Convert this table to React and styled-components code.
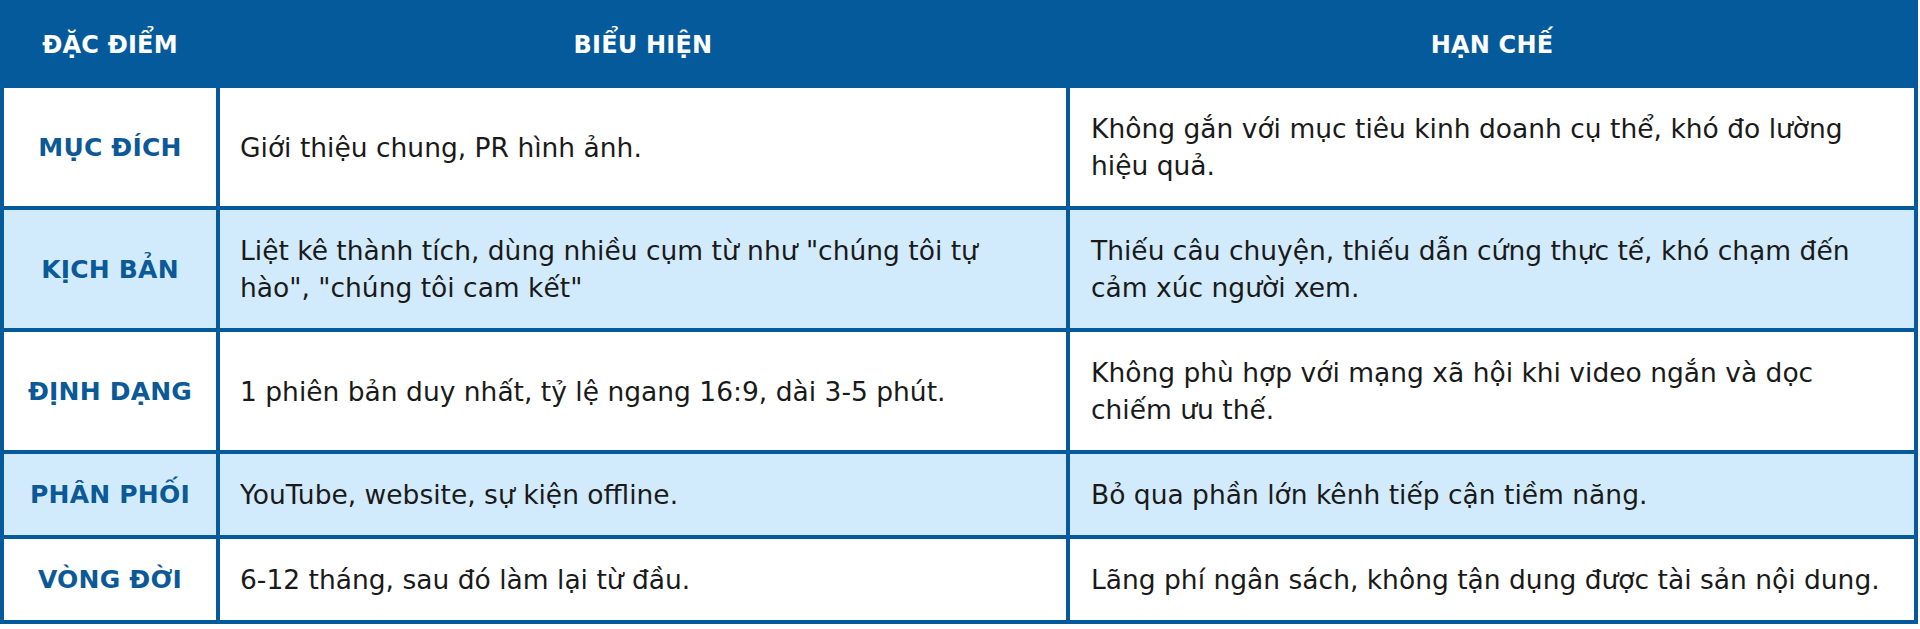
import React from 'react';
import styled, { createGlobalStyle } from 'styled-components';

const GlobalStyle = createGlobalStyle`
  html, body {
    margin: 0;
    padding: 0;
    background: #fff;
  }
  body {
    font-family: 'DejaVu Sans', 'Liberation Sans', sans-serif;
  }
`;

const BLUE = '#045a9a';

const Table = styled.div`
  display: grid;
  grid-template-columns: 212px 846px 1fr;
  gap: 4px;
  width: 1918px;
  box-sizing: border-box;
  padding: 0 4px 4px 4px;
  background: ${BLUE};
`;

const HeadCell = styled.div`
  display: flex;
  align-items: center;
  justify-content: center;
  height: 84px;
  box-sizing: border-box;
  padding-top: 5px;
  background: ${BLUE};
  color: #fff;
  font-size: 24px;
  font-weight: 700;
  letter-spacing: 0.2px;
`;

const LabelCell = styled.div`
  display: flex;
  align-items: center;
  justify-content: center;
  background: ${(p) => (p.$shaded ? '#d2ebfc' : '#fff')};
  color: #0b5a97;
  font-size: 25px;
  font-weight: 700;
  letter-spacing: 0.2px;
  text-align: center;
`;

const TextCell = styled.div`
  display: flex;
  flex-direction: column;
  justify-content: center;
  padding: 22px 20px 22px ${(p) => p.$indent}px;
  background: ${(p) => (p.$shaded ? '#d2ebfc' : '#fff')};
  color: #1a1a1a;
  font-size: 26.5px;
  line-height: 37px;
`;

const Line = styled.span`
  display: block;
  white-space: nowrap;
`;

const rows = [
  {
    label: 'MỤC ĐÍCH',
    desc: ['Giới thiệu chung, PR hình ảnh.'],
    limit: ['Không gắn với mục tiêu kinh doanh cụ thể, khó đo lường', 'hiệu quả.'],
  },
  {
    label: 'KỊCH BẢN',
    shaded: true,
    desc: ['Liệt kê thành tích, dùng nhiều cụm từ như "chúng tôi tự', 'hào", "chúng tôi cam kết"'],
    limit: ['Thiếu câu chuyện, thiếu dẫn cứng thực tế, khó chạm đến', 'cảm xúc người xem.'],
  },
  {
    label: 'ĐỊNH DẠNG',
    desc: ['1 phiên bản duy nhất, tỷ lệ ngang 16:9, dài 3-5 phút.'],
    limit: ['Không phù hợp với mạng xã hội khi video ngắn và dọc', 'chiếm ưu thế.'],
  },
  {
    label: 'PHÂN PHỐI',
    shaded: true,
    desc: ['YouTube, website, sự kiện offline.'],
    limit: ['Bỏ qua phần lớn kênh tiếp cận tiềm năng.'],
  },
  {
    label: 'VÒNG ĐỜI',
    desc: ['6-12 tháng, sau đó làm lại từ đầu.'],
    limit: ['Lãng phí ngân sách, không tận dụng được tài sản nội dung.'],
  },
];

export default function App() {
  return (
    <>
      <GlobalStyle />
      <Table>
        <HeadCell>ĐẶC ĐIỂM</HeadCell>
        <HeadCell>BIỂU HIỆN</HeadCell>
        <HeadCell>HẠN CHẾ</HeadCell>
        {rows.map((r) => (
          <React.Fragment key={r.label}>
            <LabelCell $shaded={r.shaded}>{r.label}</LabelCell>
            <TextCell $shaded={r.shaded} $indent={20}>
              {r.desc.map((t) => <Line key={t}>{t}</Line>)}
            </TextCell>
            <TextCell $shaded={r.shaded} $indent={21}>
              {r.limit.map((t) => <Line key={t}>{t}</Line>)}
            </TextCell>
          </React.Fragment>
        ))}
      </Table>
    </>
  );
}
